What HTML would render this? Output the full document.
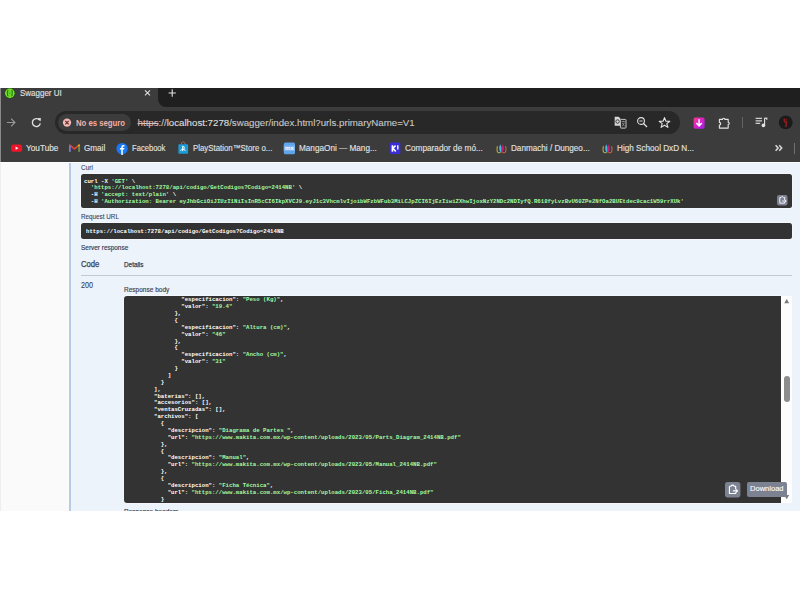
<!DOCTYPE html>
<html><head><meta charset="utf-8">
<style>
*{margin:0;padding:0;box-sizing:border-box}
html,body{width:800px;height:600px;background:#fff;overflow:hidden;position:relative}
body{font-family:"Liberation Sans",sans-serif}
.a{position:absolute}
svg.a{overflow:visible}
.t{position:absolute;white-space:pre;line-height:1;transform-origin:0 0}
.code{position:absolute;background:#333;border-radius:2.5px;box-shadow:0 0 0.6px 0.8px rgba(255,255,255,0.55)}
.mono{font-family:"Liberation Mono",monospace;font-weight:bold;font-size:6.2px;color:#fff;white-space:pre;line-height:6.88px;transform:scaleX(0.918);transform-origin:0 0}
.g{color:#a2fca2}
</style></head><body>
<div class="a" style="left:0;top:88px;width:800px;height:74px;background:#3c3c3c"></div>
<div class="a" style="left:158px;top:88px;width:642px;height:19px;background:#1f1f1f;border-bottom-left-radius:8px"></div>
<div class="a" style="left:0;top:88px;width:1.2px;height:74px;background:#8a8a8a"></div>
<svg class="a" style="left:3px;top:87px" width="14" height="13" viewBox="0 0 14 13">
<circle cx="6.85" cy="6.2" r="5.2" fill="#1d5c0c"/>
<circle cx="6.85" cy="6.2" r="4.7" fill="#85ea2d"/>
<circle cx="6.85" cy="6.2" r="3.7" fill="#6ad52a"/>
<path d="M5.4 3.4 Q4.4 3.5 4.5 4.6 L4.6 5.4 Q4.6 6.2 3.9 6.2 Q4.6 6.2 4.6 7 L4.5 7.8 Q4.4 8.9 5.4 9" fill="none" stroke="#237d0f" stroke-width="1.1"/>
<path d="M8.3 3.4 Q9.3 3.5 9.2 4.6 L9.1 5.4 Q9.1 6.2 9.8 6.2 Q9.1 6.2 9.1 7 L9.2 7.8 Q9.3 8.9 8.3 9" fill="none" stroke="#237d0f" stroke-width="1.1"/>
<path d="M6.0 6.2 H7.7" stroke="#3f9a1c" stroke-width="0.8"/>
</svg>
<div class="t" style="left:20.4px;top:89.4px;font-size:9px;color:#e3e3e3;transform:scaleX(0.887);-webkit-text-stroke:0.12px #e3e3e3;">Swagger UI</div>
<svg class="a" style="left:143px;top:90px" width="9" height="6" viewBox="0 0 9 6"><path d="M2 0.3 L7 5.4 M7 0.3 L2 5.4" stroke="#e3e3e3" stroke-width="1.05"/></svg>
<svg class="a" style="left:168px;top:89px" width="8" height="8" viewBox="0 0 8 8"><path d="M4.2 0.3 V7.7 M0.6 4 H7.8" stroke="#e3e3e3" stroke-width="1.1"/></svg>
<svg class="a" style="left:6px;top:117px" width="10" height="11" viewBox="0 0 10 11"><path d="M0.9 5.5 H8.8 M5.1 1.7 L8.9 5.5 L5.1 9.3" fill="none" stroke="#9a9a9a" stroke-width="1.1"/></svg>
<svg class="a" style="left:31px;top:117px" width="11" height="11" viewBox="0 0 11 11"><path d="M8.6 3.2 A4 4 0 1 0 9.3 6.4" fill="none" stroke="#e3e3e3" stroke-width="1.3"/><path d="M6.2 1.3 L9.9 0.9 L9.5 4.6 Z" fill="#e3e3e3"/></svg>
<div class="a" style="left:54.5px;top:110.8px;width:625px;height:23px;background:#282828;border-radius:11.5px"></div>
<div class="a" style="left:58px;top:114.2px;width:73.2px;height:16.8px;background:#3c3c3c;border-radius:8.4px"></div>
<svg class="a" style="left:62px;top:118px" width="10" height="10" viewBox="0 0 10 10"><circle cx="5" cy="4.6" r="4.15" fill="#f2b8b5"/><path d="M3.3 2.9 L6.7 6.3 M6.7 2.9 L3.3 6.3" stroke="#5c2b29" stroke-width="1.1"/></svg>
<div class="t" style="left:75.8px;top:117.7px;font-size:9.5px;color:#f2b0a9;font-weight:bold;transform:scaleX(0.815);">No es seguro</div>
<div class="t" style="left:137.6px;top:118.2px;font-size:9.7px;color:#c7c7c7;-webkit-text-stroke:0.12px #c7c7c7;"><span style="color:#f0a39b;text-decoration:line-through">https</span>://<span style="color:#e3e3e3">localhost:7278</span>/swagger/index.html?urls.primaryName=V1</div>
<svg class="a" style="left:614px;top:116px" width="13" height="13" viewBox="0 0 13 13">
<path d="M0.7 0.8 H4.6 L6.4 2.6 V9.7 H0.7 Z" fill="#d6d6d6"/>
<circle cx="3.6" cy="5.5" r="1.75" fill="none" stroke="#3a3a3a" stroke-width="1"/>
<rect x="6.4" y="3.4" width="5.6" height="8.7" rx="0.7" fill="#282828" stroke="#c8c8c8" stroke-width="1"/>
<path d="M7.6 5.6 H10.8 M9.2 4.8 V6.2 M8.1 10.4 L10.4 6.6 M8.2 6.8 L10.6 10.2" fill="none" stroke="#b0b0b0" stroke-width="0.6"/>
</svg>
<svg class="a" style="left:636px;top:116px" width="13" height="13" viewBox="0 0 13 13"><circle cx="5" cy="5" r="3.4" fill="none" stroke="#e3e3e3" stroke-width="1.1"/><path d="M3.4 5 H6.6" stroke="#e3e3e3" stroke-width="0.9"/><path d="M7.5 7.5 L11 11" stroke="#e3e3e3" stroke-width="1.2"/></svg>
<svg class="a" style="left:658px;top:116px" width="13" height="13" viewBox="0 0 13 13"><path d="M6.5 1.6 L7.9 5.2 L11.8 5.3 L8.8 7.6 L9.9 11.4 L6.5 9.2 L3.1 11.4 L4.2 7.6 L1.2 5.3 L5.1 5.2 Z" fill="none" stroke="#e3e3e3" stroke-width="1.1" stroke-linejoin="round"/></svg>
<svg class="a" style="left:693px;top:116.5px" width="12" height="12" viewBox="0 0 12 12"><defs><linearGradient id="dg" x1="0" y1="0" x2="1" y2="1"><stop offset="0" stop-color="#ff3b8f"/><stop offset="0.55" stop-color="#d21fd0"/><stop offset="1" stop-color="#9b22e6"/></linearGradient></defs><rect x="0.6" y="0.4" width="11" height="11.3" rx="2" fill="url(#dg)"/><path d="M6.1 2.2 V8.6 M3.3 5.9 L6.1 8.8 L8.9 5.9" fill="none" stroke="#fff" stroke-width="1.5"/></svg>
<svg class="a" style="left:717px;top:115.5px" width="14" height="13" viewBox="0 0 14 13"><path d="M2.4 3.4 H5.5 A1.2 1.2 0 0 1 7.9 3.4 H11.2 V6.2 A1.1 1.1 0 0 1 11.2 8.4 V12.1 H2.4 V9 A1.3 1.3 0 0 0 2.4 6.4 Z" fill="none" stroke="#e3e3e3" stroke-width="1.1" stroke-linejoin="round"/></svg>
<div class="a" style="left:742px;top:117px;width:1px;height:11px;background:#646464"></div>
<svg class="a" style="left:755px;top:117px" width="13" height="11" viewBox="0 0 13 11"><path d="M0.6 1.3 H7 M0.6 3.8 H7 M0.6 6.3 H5.2" stroke="#cfcfcf" stroke-width="1.2"/><path d="M9.6 8.4 V1.3 L11.8 1.1 V2.8" fill="none" stroke="#e3e3e3" stroke-width="1.1"/><circle cx="8.4" cy="8.4" r="1.8" fill="#e3e3e3"/></svg>
<svg class="a" style="left:778px;top:115px" width="15" height="15" viewBox="0 0 15 15"><circle cx="7.7" cy="7.4" r="6.9" fill="#1c1b1b"/><path d="M6.3 3.4 L6.6 6.6 L8.5 7.2 L7.9 12" fill="none" stroke="#8f1c1a" stroke-width="1.7" stroke-linejoin="round"/><path d="M8.4 4.2 L8.7 5.6" stroke="#8f1c1a" stroke-width="1.1"/></svg>
<svg class="a" style="left:10px;top:143px" width="13" height="10" viewBox="0 0 13 10"><rect x="1.2" y="1.5" width="10.9" height="7.3" rx="2" fill="#f0142a"/><path d="M5.6 3.5 L8.4 5.15 L5.6 6.8 Z" fill="#fff"/></svg>
<div class="t" style="left:25.8px;top:143.55px;font-size:8.5px;color:#e3e3e3;transform:scaleX(0.97);-webkit-text-stroke:0.12px #e3e3e3;">YouTube</div>
<svg class="a" style="left:68px;top:143px" width="13" height="10" viewBox="0 0 13 10"><path d="M1.8 8.8 V2.2 L6.5 5.8 L11.2 2.2 V8.8" fill="none" stroke="#ea4335" stroke-width="1.7" stroke-linejoin="round"/><path d="M1.8 8.8 V2.6" stroke="#4285f4" stroke-width="1.7"/><path d="M11.2 8.8 V2.6" stroke="#34a853" stroke-width="1.7"/><path d="M10.2 2.9 L11.6 1.8" stroke="#fbbc04" stroke-width="1.4"/></svg>
<div class="t" style="left:83.8px;top:143.55px;font-size:8.5px;color:#e3e3e3;transform:scaleX(0.955);-webkit-text-stroke:0.12px #e3e3e3;">Gmail</div>
<svg class="a" style="left:115px;top:142px" width="14" height="14" viewBox="0 0 14 14"><circle cx="7.1" cy="6.6" r="5.7" fill="#1877f2"/><path d="M7.8 13 V7.6 H9.2 L9.4 6.1 H7.8 V5.2 Q7.8 4.4 8.6 4.4 H9.5 V3 Q8.9 2.9 8.2 2.9 Q6.3 2.9 6.3 4.9 V6.1 H4.9 V7.6 H6.3 V13 Z" fill="#fff"/></svg>
<div class="t" style="left:131.8px;top:143.55px;font-size:8.5px;color:#e3e3e3;transform:scaleX(0.895);-webkit-text-stroke:0.12px #e3e3e3;">Facebook</div>
<svg class="a" style="left:177px;top:141px" width="12" height="14" viewBox="0 0 12 14"><path d="M4.3 3.4 Q4.3 0.9 6.2 0.9 Q8.1 0.9 8.1 3.4" fill="none" stroke="#a06a50" stroke-width="1"/><rect x="1.4" y="3.3" width="9.7" height="9.4" rx="0.8" fill="#1a9ad6"/><path d="M5.6 5.2 V10.2 M5.6 5.2 Q7.9 5.6 7.3 7.4 Q6.9 8.1 5.8 7.8 M3.3 9.3 Q5 8.2 7.2 8.6 Q9.2 9 7.8 9.9" fill="none" stroke="#fff" stroke-width="0.9"/></svg>
<div class="t" style="left:192.7px;top:143.55px;font-size:8.5px;color:#e3e3e3;transform:scaleX(0.923);-webkit-text-stroke:0.12px #e3e3e3;">PlayStation™Store o...</div>
<svg class="a" style="left:283px;top:141.5px" width="13" height="13" viewBox="0 0 13 13"><rect x="0.8" y="0.6" width="11.2" height="11.6" rx="1.5" fill="#5fa3e8"/><rect x="0.8" y="3.4" width="11.2" height="5.6" fill="#79b6f0"/><text x="6.4" y="8.3" font-family="Liberation Sans" font-weight="bold" font-size="6" text-anchor="middle" fill="#fff">mx</text></svg>
<div class="t" style="left:298.8px;top:143.55px;font-size:8.5px;color:#e3e3e3;transform:scaleX(0.963);-webkit-text-stroke:0.12px #e3e3e3;">MangaOni — Mang...</div>
<svg class="a" style="left:389px;top:141.5px" width="13" height="13" viewBox="0 0 13 13"><rect x="0.9" y="0.6" width="10.5" height="11.3" rx="0.8" fill="#3b2ed6"/><path d="M3.4 3.3 V9.7 M3.6 6.5 L6.6 3.6 M3.9 6.2 L6.8 9.6" fill="none" stroke="#fff" stroke-width="1.6"/><path d="M8.8 3.2 V7.5" stroke="#fff" stroke-width="1.4"/></svg>
<div class="t" style="left:404.8px;top:143.55px;font-size:8.5px;color:#e3e3e3;transform:scaleX(0.969);-webkit-text-stroke:0.12px #e3e3e3;">Comparador de mó...</div>
<svg class="a" style="left:495px;top:142.5px" width="13" height="11" viewBox="0 0 13 11"><path d="M2.3 3.2 Q1.6 6.5 2.4 9.2 Q3.8 10.1 5.6 9.6" fill="none" stroke="#c8b844" stroke-width="1"/><path d="M5.9 9.7 Q2.9 6.5 5.2 1.3 Q7.6 5 6.4 9.7 Z" fill="#44bcd6"/><path d="M6.6 9.7 Q5.6 5 7.9 1.3 Q10 6.5 7.1 9.7 Z" fill="#cf1a78"/><path d="M10.7 3.2 Q11.4 6.5 10.6 9.2 Q9.2 10.1 7.4 9.6" fill="none" stroke="#d86a3c" stroke-width="1"/></svg>
<div class="t" style="left:511.3px;top:143.55px;font-size:8.5px;color:#e3e3e3;transform:scaleX(0.957);-webkit-text-stroke:0.12px #e3e3e3;">Danmachi / Dungeo...</div>
<svg class="a" style="left:601px;top:142.5px" width="13" height="11" viewBox="0 0 13 11"><path d="M2.3 3.2 Q1.6 6.5 2.4 9.2 Q3.8 10.1 5.6 9.6" fill="none" stroke="#c8b844" stroke-width="1"/><path d="M5.9 9.7 Q2.9 6.5 5.2 1.3 Q7.6 5 6.4 9.7 Z" fill="#44bcd6"/><path d="M6.6 9.7 Q5.6 5 7.9 1.3 Q10 6.5 7.1 9.7 Z" fill="#cf1a78"/><path d="M10.7 3.2 Q11.4 6.5 10.6 9.2 Q9.2 10.1 7.4 9.6" fill="none" stroke="#d86a3c" stroke-width="1"/></svg>
<div class="t" style="left:616.8px;top:143.55px;font-size:8.5px;color:#e3e3e3;transform:scaleX(0.959);-webkit-text-stroke:0.12px #e3e3e3;">High School DxD N...</div>
<svg class="a" style="left:774px;top:144px" width="10" height="8" viewBox="0 0 10 8"><path d="M1.6 1.3 L4.1 4 L1.6 6.7 M5.2 1.3 L7.7 4 L5.2 6.7" fill="none" stroke="#dcdcdc" stroke-width="1.5"/></svg>
<div class="a" style="left:794px;top:142.5px;width:1px;height:11px;background:#707070"></div>
<div class="a" style="left:0;top:162px;width:800px;height:349px;background:#fafafa"></div>
<div class="a" style="left:0;top:162px;width:1px;height:349px;background:#eeeeee"></div>
<div class="a" style="left:69px;top:162px;width:731px;height:349px;background:#ecf3fb;border-left:2px solid #b6cce6"></div>
<div class="a" style="left:0;top:162px;width:800px;height:1.2px;background:#fdfdfd"></div>
<div class="t" style="left:80.8px;top:164.2px;font-size:7px;color:#3b4151;transform:scaleX(0.923);-webkit-text-stroke:0.1px #3b4151;">Curl</div>
<div class="code" style="left:81px;top:174.3px;width:711px;height:33.5px"></div>
<div class="a mono" style="left:84px;top:178.5px">curl -X <span class="g">'GET'</span> \
  <span class="g">'https://localhost:7278/api/codigo/GetCodigos?Codigo=2414NB'</span> \
  -H <span class="g">'accept: text/plain'</span> \
  -H <span class="g">'Authorization: Bearer eyJhbGciOiJIUzI1NiIsInR5cCI6IkpXVCJ9.eyJ1c3VhcmlvIjoibWFzbWFub3MiLCJpZCI6IjEzIiwiZXhwIjoxNzY2NDc2NDIyfQ.R618fyLvzBvU60ZPe2NfOa2BUEtdec9cac1W59rrXUk'</span></div>
<svg class="a" style="left:776.8px;top:194.9px" width="10.5" height="10.5" viewBox="0 0 15 15"><rect x="0" y="0" width="15" height="15" rx="3" fill="#7d8293"/><path d="M4 3.6 H5.6 Q6.3 2.4 7.5 2.4 Q8.7 2.4 9.4 3.6 H11 V7.2 M11 10 V11.6 H4 V3.6" fill="none" stroke="#fff" stroke-width="1.3" stroke-linejoin="round"/><path d="M7.6 8.6 H13 M11.3 6.9 L13 8.6 L11.3 10.3" fill="none" stroke="#fff" stroke-width="1.3"/></svg>
<div class="t" style="left:80.8px;top:212.5px;font-size:7px;color:#3b4151;transform:scaleX(0.902);-webkit-text-stroke:0.1px #3b4151;">Request URL</div>
<div class="code" style="left:81px;top:222.75px;width:711px;height:16.5px"></div>
<div class="a mono" style="left:86px;top:228.9px">https://localhost:7278/api/codigo/GetCodigos?Codigo=2414NB</div>
<div class="t" style="left:81px;top:244.3px;font-size:7px;color:#3b4151;transform:scaleX(0.92);-webkit-text-stroke:0.18px #3b4151;">Server response</div>
<div class="t" style="left:80.8px;top:260.05px;font-size:8.5px;color:#3b4151;transform:scaleX(0.905);-webkit-text-stroke:0.25px #3b4151;">Code</div>
<div class="t" style="left:123.9px;top:261px;font-size:7px;color:#3b4151;transform:scaleX(0.909);-webkit-text-stroke:0.25px #3b4151;">Details</div>
<div class="a" style="left:81px;top:274.6px;width:711px;height:1.4px;background:#c3c8d0"></div>
<div class="t" style="left:80.8px;top:280.7px;font-size:8.5px;color:#3b4151;transform:scaleX(0.85);-webkit-text-stroke:0.12px #3b4151;">200</div>
<div class="t" style="left:123.9px;top:285.7px;font-size:7px;color:#3b4151;transform:scaleX(0.932);-webkit-text-stroke:0.15px #3b4151;">Response body</div>
<div class="code" style="left:124px;top:295.5px;width:657.3px;height:207.2px;border-radius:3px 0 0 3px;overflow:hidden"><div class="a mono" id="json" style="left:30.3px;top:1.8px">        "especificacion": <span class="g">"Peso (Kg)"</span>,
        "valor": <span class="g">"19.4"</span>
      },
      {
        "especificacion": <span class="g">"Altura (cm)"</span>,
        "valor": <span class="g">"46"</span>
      },
      {
        "especificacion": <span class="g">"Ancho (cm)"</span>,
        "valor": <span class="g">"31"</span>
      }
    ]
  }
],
"baterias": [],
"accesorios": [],
"ventasCruzadas": [],
"archivos": [
  {
    "descripcion": <span class="g">"Diagrama de Partes "</span>,
    "url": <span class="g">"https://www.makita.com.mx/wp-content/uploads/2023/05/Parts_Diagram_2414NB.pdf"</span>
  },
  {
    "descripcion": <span class="g">"Manual"</span>,
    "url": <span class="g">"https://www.makita.com.mx/wp-content/uploads/2023/05/Manual_2414NB.pdf"</span>
  },
  {
    "descripcion": <span class="g">"Ficha Técnica"</span>,
    "url": <span class="g">"https://www.makita.com.mx/wp-content/uploads/2023/05/Ficha_2414NB.pdf"</span>
  }</div></div>
<div class="a" style="left:781.3px;top:295.5px;width:10.5px;height:207.2px;background:#fdfdfd"></div>
<svg class="a" style="left:782px;top:297px" width="9" height="8" viewBox="0 0 9 8"><path d="M4.7 2 L7.2 6.2 H2.2 Z" fill="#7a7a7a"/></svg>
<div class="a" style="left:784px;top:375.5px;width:6px;height:26.5px;background:#8d8d8d;border-radius:3px"></div>
<svg class="a" style="left:782px;top:493px" width="9" height="8" viewBox="0 0 9 8"><path d="M4.7 6.2 L7.2 2 H2.2 Z" fill="#7a7a7a"/></svg>
<svg class="a" style="left:724.9px;top:481.9px" width="15.4" height="15.4" viewBox="0 0 15 15"><rect x="0" y="0" width="15" height="15" rx="2.5" fill="#7d8293"/><path d="M4.3 4.2 H5.8 Q6.4 3.1 7.4 3.1 Q8.4 3.1 9 4.2 H10.4 V7.4 M10.4 10 V11.2 H4.3 V4.2" fill="none" stroke="#fff" stroke-width="1.1" stroke-linejoin="round"/><path d="M7.6 8.7 H12.2 M10.8 7.3 L12.2 8.7 L10.8 10.1" fill="none" stroke="#fff" stroke-width="1.1"/></svg>
<div class="a" style="left:747.2px;top:482px;width:40px;height:15.3px;background:#7d8293;border-radius:2px"></div>
<div class="t" style="left:750px;top:485.2px;font-size:8px;color:#fff;transform:scaleX(0.942);-webkit-text-stroke:0.1px #fff;">Download</div>
<div class="t" style="left:124.2px;top:507.5px;font-size:7px;color:#3b4151;transform:scaleX(0.925);-webkit-text-stroke:0.2px #3b4151;">Response headers</div>
<div class="a" style="left:0;top:510.8px;width:800px;height:90px;background:#fff"></div>
</body></html>
